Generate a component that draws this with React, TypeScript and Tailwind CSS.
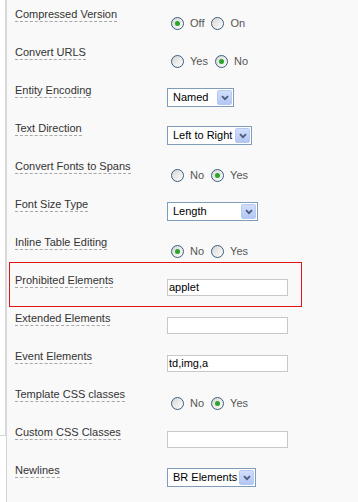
import React from "react";

type Row =
  | { label: string; kind: "radio"; options: string[]; checked: number }
  | { label: string; kind: "select"; value: string; width: string }
  | { label: string; kind: "text"; value: string; highlight?: boolean };

const rows: Row[] = [
  { label: "Compressed Version", kind: "radio", options: ["Off", "On"], checked: 0 },
  { label: "Convert URLS", kind: "radio", options: ["Yes", "No"], checked: 1 },
  { label: "Entity Encoding", kind: "select", value: "Named", width: "w-[67px]" },
  { label: "Text Direction", kind: "select", value: "Left to Right", width: "w-[85px]" },
  { label: "Convert Fonts to Spans", kind: "radio", options: ["No", "Yes"], checked: 1 },
  { label: "Font Size Type", kind: "select", value: "Length", width: "w-[91px]" },
  { label: "Inline Table Editing", kind: "radio", options: ["No", "Yes"], checked: 0 },
  { label: "Prohibited Elements", kind: "text", value: "applet", highlight: true },
  { label: "Extended Elements", kind: "text", value: "" },
  { label: "Event Elements", kind: "text", value: "td,img,a" },
  { label: "Template CSS classes", kind: "radio", options: ["No", "Yes"], checked: 1 },
  { label: "Custom CSS Classes", kind: "text", value: "" },
  { label: "Newlines", kind: "select", value: "BR Elements", width: "w-[89px]" },
];

function Radio({ on }: { on: boolean }) {
  return (
    <span className="flex h-[13px] w-[13px] items-center justify-center rounded-full border border-[#3a5d80] bg-gradient-to-br from-[#d6d6d3] to-[#ffffff]">
      {on && <span className="h-[5px] w-[5px] rounded-full bg-[#2aa52a]" />}
    </span>
  );
}

function Control({ row }: { row: Row }) {
  if (row.kind === "radio") {
    return (
      <div className="flex h-[13px] items-center pl-[4px] text-[11px] leading-[13px] text-[#555]">
        {row.options.map((opt, i) => (
          <div key={opt} className={i === 0 ? "flex items-center" : "ml-[7px] flex items-center"}>
            <Radio on={row.checked === i} />
            <span className="ml-[6px]">{opt}</span>
          </div>
        ))}
      </div>
    );
  }
  if (row.kind === "select") {
    return (
      <div
        className={`${row.width} flex h-[19px] items-center justify-between border border-[#7f9db9] bg-white pl-[5px] pr-[1px] text-[11px] leading-[13px] text-black`}
      >
        <span className="whitespace-nowrap">{row.value}</span>
        <span className="flex h-[15px] w-[15px] items-center justify-center rounded-[2px] border border-[#b6c9f2] bg-gradient-to-b from-[#d2defb] to-[#b3c7f5]">
          <svg width="8" height="6" viewBox="0 0 8 6">
            <path d="M1 1.2 L4 4.2 L7 1.2" fill="none" stroke="#4b5b7e" strokeWidth="1.8" />
          </svg>
        </span>
      </div>
    );
  }
  return (
    <div className="flex h-[17px] w-[121px] items-center border border-[#c8c8c8] bg-white pl-[1px] text-[11px] leading-[13px] text-black">
      {row.value}
    </div>
  );
}

export default function App() {
  return (
    <div className="flex h-[502px] w-[358px] font-['Liberation_Sans',Arial,sans-serif]">
      <div className="flex w-[7px] flex-col">
        <div className="h-[435px] border-r-2 border-[#dadada] bg-white" />
        <div className="flex-1 border-r border-t border-[#d4d4d4] bg-white" />
      </div>
      <div className="flex flex-1 flex-col bg-[#f9f9f9] pl-[8px]">
        {rows.map((row) => (
          <div key={row.label} className="relative flex h-[38px]">
            {row.kind === "text" && row.highlight && (
              <div className="absolute left-[-6px] top-[-4px] h-[45px] w-[293px] border border-[#e31414]" />
            )}
            <div className="flex w-[152px] items-start pt-[8px]">
              <span className="border-b border-dashed border-[#a8a8a8] text-[11px] leading-[13px] text-[#333]">
                {row.label}
              </span>
            </div>
            <div
              className={
                row.kind === "radio" ? "pt-[17px]" : row.kind === "select" ? "pt-[12px]" : "pt-[13px]"
              }
            >
              <Control row={row} />
            </div>
          </div>
        ))}
      </div>
    </div>
  );
}
